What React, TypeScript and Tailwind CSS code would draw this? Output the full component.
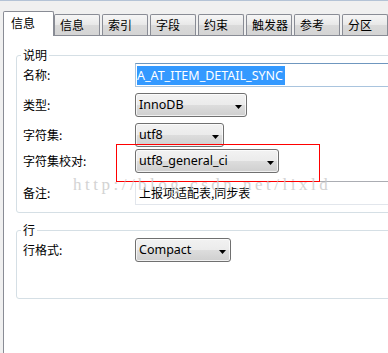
const TABS = ["信息", "索引", "字段", "约束", "触发器", "参考", "分区"];

const cjk = "font-['Noto_Sans_CJK_SC','Noto_Sans',sans-serif]";
const latin = "font-['Noto_Sans','Noto_Sans_CJK_SC',sans-serif]";

function Select({ value, width }: { value: string; width: string }) {
  return (
    <div
      className={`${width} h-[24px] flex items-center justify-between pl-[3px] pr-[4px] rounded-[3px] border border-[#707070] bg-[linear-gradient(to_bottom,#f2f2f2,#ebebeb_50%,#dddddd_50%,#cfcfcf)] shadow-[inset_0_0_0_1px_rgba(255,255,255,0.7)]`}
    >
      <span className={`${latin} text-[12.5px] leading-[22px] text-black`}>{value}</span>
      <svg width="7" height="4" viewBox="0 0 7 4" className="mt-[3px]">
        <path d="M0 0h7L3.5 4z" fill="#000" />
      </svg>
    </div>
  );
}

function Row({ label, children, className = "" }: { label: string; children: React.ReactNode; className?: string }) {
  return (
    <div className={`grid grid-cols-[112px_1fr] items-center ${className}`}>
      <span className={`${cjk} text-[12px] leading-[16px] text-black`}>{label}</span>
      {children}
    </div>
  );
}

export default function App() {
  return (
    <div className="w-[388px] h-[353px] overflow-hidden bg-[#f0f0f0]">
      <div className="h-px bg-[#b4c3d6]" />
      <div className="h-[34px] flex items-end pl-[3px] gap-[2px]">
        <div
          className={`relative z-10 -mb-px -mr-[2px] w-[51px] h-[25px] flex items-center pl-[7px] pb-[3px] bg-white border border-b-0 border-[#898c95] rounded-t-[2px] ${cjk} text-[12px] text-black`}
        >
          信息
        </div>
        {TABS.map((t) => (
          <div
            key={t}
            className={`w-[46px] h-[21px] flex items-center pl-[5px] border border-b-0 border-[#898c95] rounded-t-[2px] bg-[linear-gradient(to_bottom,#f6f6f6,#e8e8e8_50%,#dadada_50%,#d4d4d4)] ${cjk} text-[12px] text-black`}
          >
            {t}
          </div>
        ))}
      </div>

      <div className="relative ml-[3px] h-[318px] bg-white border-l border-t border-[#898c95] pt-[12px] pl-[12px]">
        <fieldset className="w-[380px] rounded-[3px] border border-[#d5dfe5]">
          <legend className={`ml-[4px] px-[2px] ${cjk} text-[12px] leading-[14px] text-black`}>说明</legend>
          <div className="pl-[6px] pt-[1px] pb-[7px]">
            <Row label="名称:">
              <div className="h-[24px] flex items-center px-[1px] border border-[#a9c4de] border-t-[#6f97bf]">
                <span className={`${latin} bg-[#3399ff] text-white text-[12.5px] leading-[19px] pr-[2px]`}>
                  A_AT_ITEM_DETAIL_SYNC
                </span>
              </div>
            </Row>
            <Row label="类型:" className="mt-[6px]">
              <Select value="InnoDB" width="w-[112px]" />
            </Row>
            <Row label="字符集:" className="mt-[6px]">
              <Select value="utf8" width="w-[89px]" />
            </Row>
            <Row label="字符集校对:" className="mt-[2px]">
              <Select value="utf8_general_ci" width="w-[144px]" />
            </Row>
            <Row label="备注:" className="mt-[8px]">
              <div className="h-[24px] flex items-center px-[3px] border border-[#e2e6ec] border-t-[#abadb3]">
                <span className={`${cjk} text-[12px] leading-[16px] text-black`}>上报项适配表,同步表</span>
              </div>
            </Row>
          </div>
        </fieldset>

        <fieldset className="mt-[10px] w-[380px] rounded-[3px] border border-[#d5dfe5]">
          <legend className={`ml-[4px] px-[2px] ${cjk} text-[12px] leading-[14px] text-black`}>行</legend>
          <div className="pl-[6px] pt-[1px] pb-[36px]">
            <Row label="行格式:">
              <Select value="Compact" width="w-[96px]" />
            </Row>
          </div>
        </fieldset>

        <div className="absolute left-[112px] top-[108px] w-[204px] h-[38px] border border-[#ff0000]" />
        <div className="absolute left-[69px] top-[139px] font-['Liberation_Serif',serif] text-[17px] leading-[20px] tracking-[3.5px] text-[#c9c9c9] opacity-80 pointer-events-none">
          http://blog.csdn.net/lixld
        </div>
      </div>
    </div>
  );
}
